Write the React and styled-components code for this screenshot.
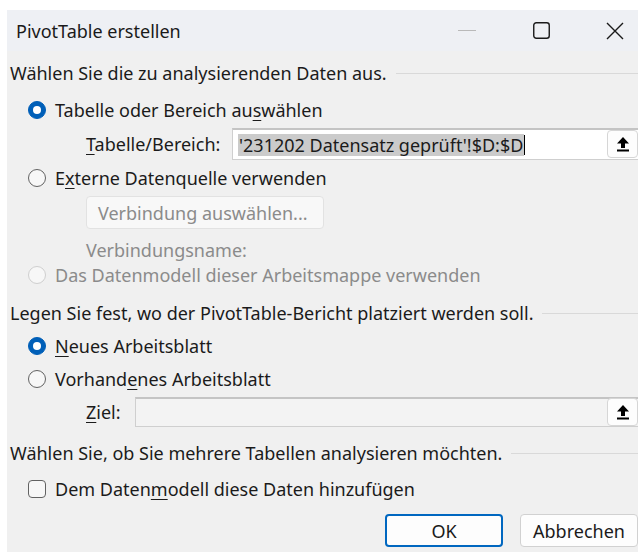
import React from "react";
import styled, { createGlobalStyle } from "styled-components";

const GlobalStyle = createGlobalStyle`
  html, body {
    margin: 0;
    padding: 0;
    background: #ffffff;
  }
  body {
    font-family: "Noto Sans", "Open Sans", sans-serif;
    color: #1b1b1b;
  }
`;

const FONT = "18px";

const Page = styled.div`
  width: 638px;
  height: 552px;
  padding: 10px 0 0 7px;
  box-sizing: border-box;
  overflow: hidden;
`;

const Dialog = styled.div`
  width: 645px;
  height: 542px;
  background: #f0f0f0;
  display: flex;
  flex-direction: column;
`;

const TitleBar = styled.div`
  height: 41px;
  background: #eef0f4;
  display: flex;
  align-items: center;
  padding-left: 9px;
  font-size: ${FONT};
  color: #1a1a1a;
`;

const Title = styled.div`
  flex: 1;
`;

const Caption = styled.div`
  width: 74px;
  height: 41px;
  display: flex;
  align-items: center;
  justify-content: center;
`;

const Body = styled.div`
  display: flex;
  flex-direction: column;
  padding: 0 0 0 3px;
  font-size: ${FONT};
  line-height: 24px;
`;

const Section = styled.div`
  height: 24px;
  margin-top: ${(p) => p.$top}px;
  display: flex;
  align-items: center;
  gap: 9px;
  white-space: nowrap;

  &::after {
    content: "";
    flex: 1;
    height: 1px;
    background: #d9d9d9;
  }
`;

const Row = styled.div`
  height: ${(p) => p.$h || 24}px;
  margin-top: ${(p) => p.$top}px;
  padding-left: ${(p) => p.$indent}px;
  display: flex;
  align-items: center;
  gap: 9px;
  white-space: nowrap;
  color: ${(p) => (p.$muted ? "#8b8b8b" : "inherit")};
`;

const Radio = styled.span`
  width: 18px;
  height: 18px;
  box-sizing: border-box;
  border-radius: 50%;
  flex: none;
  position: relative;
  background: ${(p) => (p.$checked ? "#005fb8" : "#f7f7f7")};
  border: 1px solid
    ${(p) => (p.$checked ? "#005fb8" : p.$disabled ? "#cfcfcf" : "#626262")};

  &::after {
    content: "";
    display: ${(p) => (p.$checked ? "block" : "none")};
    position: absolute;
    left: 50%;
    top: 50%;
    width: 8px;
    height: 8px;
    margin: -4px 0 0 -4px;
    border-radius: 50%;
    background: #ffffff;
  }
`;

const Check = styled.span`
  width: 18px;
  height: 18px;
  box-sizing: border-box;
  border-radius: 4px;
  border: 1px solid #626262;
  background: #f7f7f7;
  flex: none;
`;

const Key = styled.span`
  text-decoration: underline;
  text-underline-offset: 3px;
`;

const FieldLabel = styled.span`
  width: ${(p) => p.$w}px;
  flex: none;
`;

const Field = styled.div`
  flex: 1;
  height: ${(p) => p.$h}px;
  box-sizing: border-box;
  display: flex;
  align-items: center;
  background: ${(p) => (p.$disabled ? "#f3f3f3" : "#ffffff")};
  border: 1px solid #cfcfcf;
  border-top: 2px solid #c4c4c4;
  border-right: none;
  padding-left: 5px;
`;

const FieldText = styled.div`
  flex: 1;
  display: flex;
  align-items: center;
`;

const Selected = styled.span`
  background: #cbcbcb;
  padding: 0 1px;
  line-height: 22px;
`;

const Caret = styled.span`
  width: 1px;
  height: 20px;
  background: #000;
`;

const PickButton = styled.div`
  width: 31px;
  height: 28px;
  box-sizing: border-box;
  background: #fdfdfd;
  border: 1px solid #d6d6d6;
  border-radius: 4px;
  display: flex;
  align-items: center;
  justify-content: center;
  margin: -1px 14px 0 0;
`;

const GhostButton = styled.div`
  width: 238px;
  height: 33px;
  box-sizing: border-box;
  border: 1px solid #e2e2e2;
  border-radius: 4px;
  background: #f8f8f8;
  color: #8b8b8b;
  display: flex;
  align-items: center;
  padding-left: 11px;
`;

const Footer = styled.div`
  margin-top: 13px;
  padding-right: 14px;
  display: flex;
  justify-content: flex-end;
  gap: 17px;
`;

const Button = styled.div`
  width: 118px;
  height: 33px;
  box-sizing: border-box;
  border-radius: 4px;
  background: #fdfdfd;
  border: ${(p) => (p.$primary ? "2px solid #0067c0" : "1px solid #d1d1d1")};
  display: flex;
  align-items: center;
  justify-content: center;
  color: #1a1a1a;
`;

const UploadIcon = () => (
  <svg width="14" height="16" viewBox="0 0 14 16">
    <path d="M7 1 L13 7.5 H9 V12 H5 V7.5 H1 Z" fill="#000" />
    <rect x="1" y="13.5" width="12" height="2" fill="#000" />
  </svg>
);

const Picker = () => (
  <PickButton>
    <UploadIcon />
  </PickButton>
);

export default function App() {
  return (
    <>
      <GlobalStyle />
      <Page>
        <Dialog>
          <TitleBar>
            <Title>PivotTable erstellen</Title>
            <Caption>
              <svg width="18" height="2" viewBox="0 0 18 2">
                <rect width="18" height="1" fill="#b9b9b9" />
              </svg>
            </Caption>
            <Caption>
              <svg width="17" height="17" viewBox="0 0 17 17">
                <rect x="0.75" y="0.75" width="15.5" height="15.5" rx="2.5" fill="none" stroke="#1a1a1a" strokeWidth="1.4" />
              </svg>
            </Caption>
            <Caption>
              <svg width="18" height="18" viewBox="0 0 18 18">
                <path d="M1 1 L17 17 M17 1 L1 17" stroke="#1a1a1a" strokeWidth="1.4" />
              </svg>
            </Caption>
          </TitleBar>

          <Body>
            <Section $top={10}>Wählen Sie die zu analysierenden Daten aus.</Section>
            <Row $top={13} $indent={18}>
              <Radio $checked />
              <span>
                Tabelle oder Bereich au<Key>s</Key>wählen
              </span>
            </Row>
            <Row $top={6} $h={32} $indent={76}>
              <FieldLabel $w={137}>
                <Key>T</Key>abelle/Bereich:
              </FieldLabel>
              <Field $h={32}>
                <FieldText>
                  <Selected>'231202 Datensatz geprüft'!$D:$D</Selected>
                  <Caret />
                </FieldText>
                <Picker />
              </Field>
            </Row>
            <Row $top={6} $indent={18}>
              <Radio />
              <span>
                E<Key>x</Key>terne Datenquelle verwenden
              </span>
            </Row>
            <Row $top={6} $h={33} $indent={76}>
              <GhostButton>Verbindung auswählen...</GhostButton>
            </Row>
            <Row $top={9} $indent={76} $muted>
              Verbindungsname:
            </Row>
            <Row $top={1} $indent={18} $muted>
              <Radio $disabled />
              <span>Das Datenmodell dieser Arbeitsmappe verwenden</span>
            </Row>

            <Section $top={14}>
              Legen Sie fest, wo der PivotTable-Bericht platziert werden soll.
            </Section>
            <Row $top={9} $indent={18}>
              <Radio $checked />
              <span>
                <Key>N</Key>eues Arbeitsblatt
              </span>
            </Row>
            <Row $top={9} $indent={18}>
              <Radio />
              <span>
                Vorhand<Key>e</Key>nes Arbeitsblatt
              </span>
            </Row>
            <Row $top={6} $h={30} $indent={76}>
              <FieldLabel $w={40}>
                <Key>Z</Key>iel:
              </FieldLabel>
              <Field $h={30} $disabled>
                <FieldText />
                <Picker />
              </Field>
            </Row>

            <Section $top={14}>Wählen Sie, ob Sie mehrere Tabellen analysieren möchten.</Section>
            <Row $top={12} $indent={18}>
              <Check />
              <span>
                Dem Daten<Key>m</Key>odell diese Daten hinzufügen
              </span>
            </Row>

            <Footer>
              <Button $primary>OK</Button>
              <Button>Abbrechen</Button>
            </Footer>
          </Body>
        </Dialog>
      </Page>
    </>
  );
}
